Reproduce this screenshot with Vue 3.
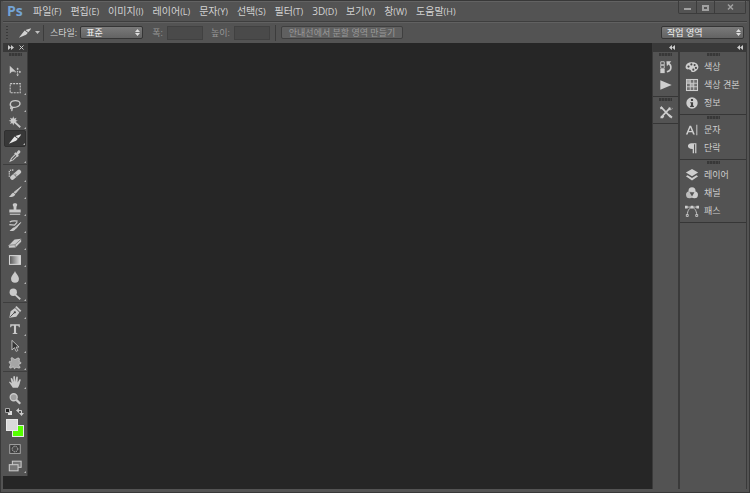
<script setup>
import { ref } from 'vue'

const menus = [
  ['파일', 'F'], ['편집', 'E'], ['이미지', 'I'], ['레이어', 'L'], ['문자', 'Y'], ['선택', 'S'],
  ['필터', 'T'], ['3D', 'D'], ['보기', 'V'], ['창', 'W'], ['도움말', 'H'],
]

const icons = {
  move: '<path d="M2 2v9l2.4-2.2L9 8.6z" fill="currentColor"/><path d="M11 5.5v7M7.500 9h7" stroke="currentColor" stroke-dasharray="1.500 1"/><path d="M11 4l1.500 2h-3zM11 14l1.500-2h-3zM15 9l-2-1.500v3z" fill="currentColor"/>',
  marquee: '<rect x="2.500" y="3" width="11.500" height="10.500" fill="none" stroke="currentColor" stroke-width="1.200" stroke-dasharray="2.300 1.100"/>',
  lasso: '<path d="M5 10.500C1 9 2 3 8.500 3c6 0 7 5 2 7-2 .8-4.500 .8-5.500 .5zm0 0c-1.800-.5-2.600 1-1.400 1.800 1 .6 2-.4 1.400-1.800zm-.6 1.800c.6 1 .4 1.700-.4 2.500" fill="none" stroke="currentColor" stroke-width="1.500"/>',
  wand: '<path d="M6 1.500l1 2.800 2.800-1.300-1.300 2.700 2.700 1-2.700 1 1.200 2.600L7 9.200 6 12 5 9.200l-2.700 1.100 1.200-2.600-2.700-1 2.700-1L2.300 3 5 4.300z" fill="currentColor"/><circle cx="6" cy="6.700" r="2.800" fill="currentColor"/><path d="M8 8.500l6 5.500" stroke="currentColor" stroke-width="2"/>',
  slice: '<path d="M1 13.500L7.500 5.200l3.700 2.600c-1 2.300-3.500 3.200-6 3.800z" fill="currentColor"/><path d="M8.500 4.700l6.500-2.200-1 2-2.200 2.500z" fill="currentColor"/>',
  dropper: '<path d="M9 5.500L4 10.600 2.500 14l3.300-1.600L10.800 7.500" fill="none" stroke="currentColor" stroke-width="1.200"/><path d="M7 5l1.500-1.200 1 .8 1.800-2.600c1.500-1.500 3.800.5 2.500 2.400l-2.300 2.300 .8 1-1.200 1.400z" fill="currentColor"/>',
  heal: '<path d="M5 11l7.500-6.500" stroke="currentColor" stroke-width="5" stroke-linecap="round"/><path d="M6.500 7l4 4M8 8h1M8.500 6.500l.7.7M10 8l.6.5" stroke="#666"/><path d="M1.500 10V4c0-1.500 1.500-2 5-1.500" fill="none" stroke="currentColor" stroke-width="1.500" stroke-dasharray="1.500 1"/>',
  brush: '<path d="M15 2L8.500 9.500 7 8.200z" fill="currentColor" stroke="currentColor"/><path d="M6 8.500l2.300 2C7.300 13.500 4.500 14 1 13.300c2.500-1 2.500-3.800 5-4.800z" fill="currentColor"/>',
  stamp: '<path d="M8 1.500c3 0 3 2 1.700 4L9.500 8.500H14.500V12h-13V8.500h5L6.300 5.500C5 3.500 5 1.500 8 1.500z" fill="currentColor"/><path d="M2 14h12" stroke="currentColor" stroke-width="1.300"/>',
  history: '<path d="M14.500 4l-5.500 7-1.500-1z" fill="currentColor" stroke="currentColor"/><path d="M7 9.500l1.800 1.500c-1 2.500-4 3-7 2.300 2.200-.8 2.700-3 5.200-3.800z" fill="currentColor"/><path d="M1.500 6.500L7.500 7 10.500 3.500M2 3.500c3-2 6-1.500 9-1" fill="none" stroke="currentColor" stroke-width="1.400"/>',
  eraser: '<path d="M1 10.500L7.500 4l7.500-1v3.500L8.500 13 1 13.500z" fill="currentColor"/><path d="M1.500 10.500l6.500-.5 7-6.500M8 10l.5 2.500" fill="none" stroke="#808080"/>',
  gradient: '<defs><linearGradient id="ramp"><stop stop-color="#555"/><stop offset="1" stop-color="#e0e0e0"/></linearGradient></defs><rect x="1.700" y="3" width="12.500" height="10" fill="url(#ramp)" stroke="#d5d5d5" stroke-width="1.200"/>',
  blur: '<path d="M8 1c1 3 4.500 5.500 4.500 9a4.500 4.500 0 0 1-9 0C3.500 6.500 7 4 8 1z" fill="currentColor"/>',
  dodge: '<circle cx="6" cy="6" r="4.200" fill="currentColor"/><path d="M8.500 9l5.500 5" stroke="currentColor" stroke-width="2"/>',
  pen: '<path d="M1.500 14.500L3 7 8 3.500l5 5-3.500 5z" fill="currentColor"/><path d="M9 1.800l5.500 5.500" stroke="currentColor" stroke-width="2.200"/><path d="M2.500 13.500L7.500 8.500" stroke="#444"/><circle cx="7.800" cy="8.300" r="1.300" fill="#444"/>',
  type: '<path d="M2.500 2.500h11v3.500h-1l-.7-1.800H9.200v8l1.600.8v.6H5.200V13l1.600-.8v-8H4.200L3.500 6h-1z" fill="currentColor"/>',
  arrow: '<path d="M4.500 1.500v11l2.900-2.600 1.900 4.200 1.900-.9-1.900-4h3.300z" fill="#333" stroke="currentColor"/>',
  shape: '<path d="M4 2c1.500-.5 2.500 2 4 2s3-2.500 4.500-1.500-.5 3 .5 4 2 .5 2 1.500-3 1-3 2 2.500 2.500 1.500 3.500-3.500-1-4.500-.5-.5 1.500-1.500 1.500-.5-2-1.500-2-3 2-4 1 1.500-3 1-4S1 8 1.500 6.500 3.500 7 4 6s-1-3.500 0-4z" fill="#a5a5a5" stroke="currentColor"/>',
  hand: '<path d="M5.500 14.500C4 12.500 2.500 10 1 8c.8-1 2.200 0 3.300 1.500L3 4c.6-1.100 1.700-.7 2.100.3L6.400 8 6 2c.6-1.100 1.800-1 2 0L8.400 8 9.400 2.200c.6-.9 1.800-.7 1.800.4L11 8.500 13 5c.8-.6 1.800 0 1.500 1-1.200 2.700-1 5.700-3.200 8.500z" fill="currentColor"/>',
  zoom: '<circle cx="6.500" cy="6" r="4" fill="#a0a0a0" stroke="currentColor" stroke-width="1.500"/><path d="M9.500 9l4.500 4.500" stroke="currentColor" stroke-width="2.500"/>',
  mask: '<rect x="2" y="3" width="12" height="10" fill="#3c3c3c" stroke="#b0b0b0"/><circle cx="8" cy="8" r="3.200" fill="#4a4a4a" stroke="#ccc" stroke-dasharray="1.500 .8"/>',
  screen: '<rect x="5" y="2.500" width="10" height="7" fill="#777" stroke="currentColor" stroke-width="1.200"/><rect x="1.500" y="6.500" width="10" height="7" fill="#777" stroke="currentColor" stroke-width="1.200"/>',
  historyPanel: '<path d="M2 2h4v3.500H2zM2 6h4v3.500H2z" fill="none" stroke="currentColor"/><path d="M1.500 10.200h5V15h-5z" fill="currentColor"/><path d="M9 13.500c6-1.500 5.500-7.500 2-9.500" fill="none" stroke="currentColor" stroke-width="1.800"/><path d="M8.500 1.500h5.500L9 7z" fill="currentColor"/>',
  play: '<path d="M1.500 2.500l13 5.500-13 5.500z" fill="currentColor"/>',
  presets: '<path d="M3 3l10 10.500M13 3L4 12.500" stroke="currentColor" stroke-width="1.900"/><path d="M1 3l2-2 1.500 3-2.500 1zM11 1v3.500l4 .5-.5-2 1 .5c-.5 3.500-4.500 2.500-5 1.500zM1.500 15l.5-2.500 2.500-1 1.500 1.500-1.500 2zM10 11.500l2-1 3.500 3-1.500 2z" fill="currentColor"/>',
  color: '<path d="M8 2.500c4.500 0 7.300 2.300 7.300 5.500S11.500 13.800 8.700 13.800c-2.200 0-1.200-2.500-3-2.800S.7 11.200.7 8 3.500 2.500 8 2.500z" fill="currentColor"/><g fill="#484848"><circle cx="4" cy="7.500" r="1.300"/><circle cx="7.300" cy="5" r="1.200"/><circle cx="11" cy="5.800" r="1.200"/><circle cx="12.500" cy="9" r="1.200"/><circle cx="9.500" cy="11" r="1.200"/></g>',
  swatches: '<rect x="1.700" y="1.700" width="12.600" height="12.600" fill="#707070" stroke="currentColor" stroke-width="1.200"/><path d="M2 2h4v4H2zM6 6h4v4H6z" fill="#a8a8a8"/><path d="M2 6h12M2 10h12M6 2v12M10 2v12" stroke="currentColor"/>',
  info: '<circle cx="8" cy="8" r="6.500" fill="currentColor"/><path d="M6.800 3.500h2.400v2.300H6.800zM6 7h3.200v4.200h1v1.300H5.800v-1.300h1V8.300H6z" fill="#444"/>',
  character: '<path d="M1 13L5.200 3h1.800L11.200 13H9.200l-.9-2.400H3.900L3 13zM4.500 9.200h3.200L6.100 5.200z" fill="currentColor"/><path d="M13.500 2v12" stroke="currentColor" stroke-width="1.100"/>',
  paragraph: '<path d="M13 2.500v11.500h-1.400V3.800h-1.300V14H8.800V9C1.800 9.300 1.800 2.500 7.500 2.500z" fill="currentColor"/>',
  layers: '<path d="M8 1l7 4.200-7 4.300-7-4.300z" fill="currentColor"/><path d="M1 9.500l2-1.200 5 3 5-3 2 1.200-7 4.700z" fill="currentColor"/>',
  channels: '<circle cx="8" cy="5.300" r="4" fill="currentColor"/><circle cx="5.200" cy="10" r="4" fill="#bcbcbc"/><circle cx="10.800" cy="10" r="4" fill="currentColor"/><path d="M5.200 7h5.600L8 12z" fill="#555"/>',
  paths: '<path d="M2.500 12.500C3 7 5.500 4 8 4s5 3 5.500 8.500M1 3.500h14" fill="none" stroke="currentColor"/><path d="M0 2h3v3H0zM6.500 2h3v3h-3zM13 2h3v3h-3z" fill="currentColor"/><path d="M1.500 12h2.200v2.200H1.500zM12.300 12h2.200v2.200h-2.200z" fill="#555" stroke="currentColor"/>',
}

const toolGroups = [
  ['move', 'marquee', 'lasso', 'wand', 'slice', 'dropper'],
  ['heal', 'brush', 'stamp', 'history', 'eraser', 'gradient', 'blur', 'dodge'],
  ['pen', 'type', 'arrow', 'shape'],
  ['hand', 'zoom'],
]
const withoutFlyout = ['move', 'zoom']
const activeTool = ref('slice')

const iconDock = [['historyPanel', 'play'], ['presets']]
const panelDock = [
  [['color', '색상'], ['swatches', '색상 견본'], ['info', '정보']],
  [['character', '문자'], ['paragraph', '단락']],
  [['layers', '레이어'], ['channels', '채널'], ['paths', '패스']],
]
</script>

<template>
  <div class="app">
    <header class="menubar">
      <span class="logo">Ps</span>
      <nav class="menus">
        <button v-for="[name, key] in menus" :key="key" type="button">{{ name }}<small>({{ key }})</small></button>
      </nav>
      <div class="window-buttons">
        <button type="button"><svg width="9" height="8"><path d="M1 5h7v2H1z" fill="#a0a0a0" /></svg></button>
        <button type="button"><svg width="9" height="8"><path d="M1 2h7v6H1zM3 4v2h3V4z" fill="#a0a0a0" fill-rule="evenodd" /></svg></button>
        <button type="button" class="wide"><svg width="9" height="8"><path d="M2 1.500l5 5M7 1.500l-5 5" stroke="#a0a0a0" stroke-width="1.500" /></svg></button>
      </div>
    </header>

    <form class="options" @submit.prevent>
      <i class="handle"></i>
      <button type="button" class="current-tool">
        <svg width="14" height="14" viewBox="0 0 16 16" v-html="icons.slice"></svg>
        <svg width="5" height="3"><path d="M0 0h5L2.500 3z" fill="#c0c0c0" /></svg>
      </button>
      <i class="rule"></i>
      <label for="style">스타일:</label>
      <span class="select style-select">
        <select id="style"><option>표준</option></select>
        <svg width="5" height="7"><path d="M0 3h5L2.500 0zM0 4h5L2.500 7z" fill="#ddd" /></svg>
      </span>
      <label for="width" class="off">폭:</label>
      <input id="width" type="text" disabled />
      <label for="height" class="off">높이:</label>
      <input id="height" type="text" disabled />
      <i class="rule"></i>
      <button type="button" class="guides" disabled>안내선에서 분할 영역 만들기</button>
      <span class="select workspace-select">
        <select><option>작업 영역</option></select>
        <svg width="5" height="7"><path d="M0 3h5L2.500 0zM0 4h5L2.500 7z" fill="#ddd" /></svg>
      </span>
    </form>

    <main class="workspace">
      <aside class="toolbox">
        <div class="tool-head">
          <svg width="6" height="5"><path d="M0 0l3 2.500L0 5zM3 0l3 2.500L3 5z" fill="#ccc" /></svg>
          <svg width="5" height="5"><path d="M.5.5l4 4M4.500.5l-4 4" stroke="#ccc" /></svg>
        </div>
        <i class="grip"></i>
        <div v-for="(group, g) in toolGroups" :key="g" class="tools">
          <button
            v-for="tool in group" :key="tool" type="button" class="tool"
            :class="{ active: tool === activeTool, flyout: !withoutFlyout.includes(tool) }"
            @click="activeTool = tool"
          >
            <svg width="14" height="14" viewBox="0 0 16 16" v-html="icons[tool]"></svg>
          </button>
        </div>
        <div class="mini">
          <button type="button"><svg width="8" height="8"><path d="M3 3h4v4H3z" fill="#ddd" /><path d="M.5.5h4v4h-4z" fill="#222" stroke="#aaa" /></svg></button>
          <button type="button"><svg width="8" height="8"><path d="M2 2.500h3.500V6" fill="none" stroke="#ccc" /><path d="M0 2.500L3 0v5zM5.500 8L3 5h5z" fill="#ccc" /></svg></button>
        </div>
        <div class="colors">
          <button type="button" class="back"></button>
          <button type="button" class="front"></button>
        </div>
        <button type="button" class="tool"><svg width="14" height="14" viewBox="0 0 16 16" v-html="icons.mask"></svg></button>
        <button type="button" class="tool flyout"><svg width="14" height="14" viewBox="0 0 16 16" v-html="icons.screen"></svg></button>
      </aside>

      <section class="canvas"></section>

      <aside class="dock">
        <div class="dock-head"><svg width="6" height="5"><path d="M3 0L0 2.500 3 5zM6 0L3 2.500 6 5z" fill="#ccc" /></svg></div>
        <div v-for="(group, g) in iconDock" :key="g" class="group">
          <i class="grip"></i>
          <button v-for="name in group" :key="name" type="button" class="panel">
            <svg width="14" height="14" viewBox="0 0 16 16" v-html="icons[name]"></svg>
          </button>
        </div>
      </aside>
      <aside class="dock labelled">
        <div class="dock-head"><svg width="6" height="5"><path d="M3 0L0 2.500 3 5zM6 0L3 2.500 6 5z" fill="#ccc" /></svg></div>
        <div v-for="(group, g) in panelDock" :key="g" class="group">
          <i class="grip"></i>
          <button v-for="[name, label] in group" :key="name" type="button" class="panel">
            <svg width="14" height="14" viewBox="0 0 16 16" v-html="icons[name]"></svg>{{ label }}
          </button>
        </div>
      </aside>
    </main>
  </div>
</template>

<style>
body { margin: 0; background: #535353; }
</style>

<style scoped>
* { box-sizing: border-box; }
.app {
  display: flex;
  flex-direction: column;
  min-height: 100vh;
  padding: 0 2px 3px;
  border: 1px solid #383838;
  background: #535353;
  color: #d2d2d2;
  font: 9px/12px "Open Sans", "Noto Sans CJK KR", sans-serif;
}
button, input, select { margin: 0; padding: 0; border: 0; background: none; color: inherit; font: inherit; }
svg { display: block; flex: none; }

.menubar { display: flex; align-items: center; height: 20px; padding-left: 4px; box-shadow: inset 0 1px #626262; }
.logo { width: 26px; color: #73a3d6; font-size: 14px; line-height: 18px; font-weight: 700; }
.menus { display: flex; gap: 9px; font-size: 10px; }
.menus small { font-size: 9px; }
.window-buttons { display: flex; align-self: flex-start; margin: 0 1px 0 auto; border: 1px solid #3c3c3c; border-top: 0; border-radius: 0 0 2px 2px; }
.window-buttons button { display: grid; place-items: center; width: 18px; height: 12px; border-right: 1px solid #3c3c3c; }
.window-buttons .wide { width: 30px; border-right: 0; }

.options { display: flex; align-items: center; height: 22px; border-top: 1px solid #3e3e3e; box-shadow: inset 0 1px #616161; }
.handle { width: 2px; height: 14px; margin: 0 10px 0 3px; background: repeating-linear-gradient(#3a3a3a 0 1px, transparent 1px 3px); }
.current-tool { display: flex; align-items: center; gap: 3px; }
.rule { width: 1px; height: 16px; margin: 0 6px 0 3px; background: #3c3c3c; }
.select { position: relative; display: flex; }
.select select { appearance: none; width: 100%; height: 13px; padding-left: 5px; border: 1px solid #353535; border-radius: 2px; background: linear-gradient(#7a7a7a, #636363); color: #f2f2f2; line-height: 11px; }
.select svg { position: absolute; right: 3px; top: 3px; }
.style-select { width: 63px; margin: 0 9px 0 3px; }
.workspace-select { width: 83px; margin: 0 3px 0 auto; }
.off { color: #979797; }
.options input { width: 36px; height: 14px; margin: 0 8px 0 4px; border: 1px solid #414141; background: #4a4a4a; }
.options input + .rule { margin: 0 5px 0 -3px; }
.guides { height: 13px; padding: 0 7px; border: 1px solid #3f3f3f; border-radius: 2px; background: #606060; color: #999; line-height: 11px; }

.workspace { display: flex; flex: 1; background: #262626; }
.toolbox { display: flex; flex-direction: column; align-self: flex-start; width: 25px; padding-bottom: 2px; border-right: 1px solid #3a3a3a; background: #535353; }
.tool-head { display: flex; align-items: center; justify-content: space-between; height: 9px; padding: 0 3px 0 5px; background: #393939; }
.grip { display: block; width: 13px; height: 3px; margin: 1px auto 2px; background: repeating-linear-gradient(90deg, #383838 0 2px, #454545 2px 3px); }
.toolbox > .grip { margin-bottom: 6px; }
.tools + .tools { border-top: 1px solid #3e3e3e; }
.tools:nth-of-type(2n + 1) { padding-top: 1px; }
.tool { position: relative; display: grid; place-items: center; width: 22px; height: 17px; margin-left: 1px; color: #cacaca; }
.tool.active { border: 1px solid #303030; border-radius: 2px; background: #383838; color: #e6e6e6; }
.flyout::after { content: ""; position: absolute; right: 0; bottom: 1px; border: 1px solid #b4b4b4; border-top-color: transparent; border-left-color: transparent; }
.mini { display: flex; justify-content: space-between; padding: 1px 3px 2px 2px; }
.colors { position: relative; height: 22px; }
.colors button { position: absolute; width: 12px; height: 12px; border: 1px solid #e8e8e8; }
.colors .front { left: 3px; top: 1px; background: #d9d9d9; }
.colors .back { left: 9px; top: 7px; background: #5f0; }

.canvas { flex: 1; }
.dock { width: 27px; border-left: 1px solid #3a3a3a; border-right: 1px solid #3a3a3a; background: #535353; color: #cecece; }
.dock.labelled { width: 68px; }
.dock-head { display: flex; align-items: center; justify-content: flex-end; height: 9px; padding-right: 3px; background: #393939; }
.group { display: flex; flex-direction: column; padding-bottom: 2px; border-bottom: 1px solid #363636; }
.panel { display: flex; align-items: center; justify-content: center; gap: 5px; height: 18px; white-space: nowrap; }
.labelled .panel { justify-content: flex-start; padding-left: 5px; }
</style>
